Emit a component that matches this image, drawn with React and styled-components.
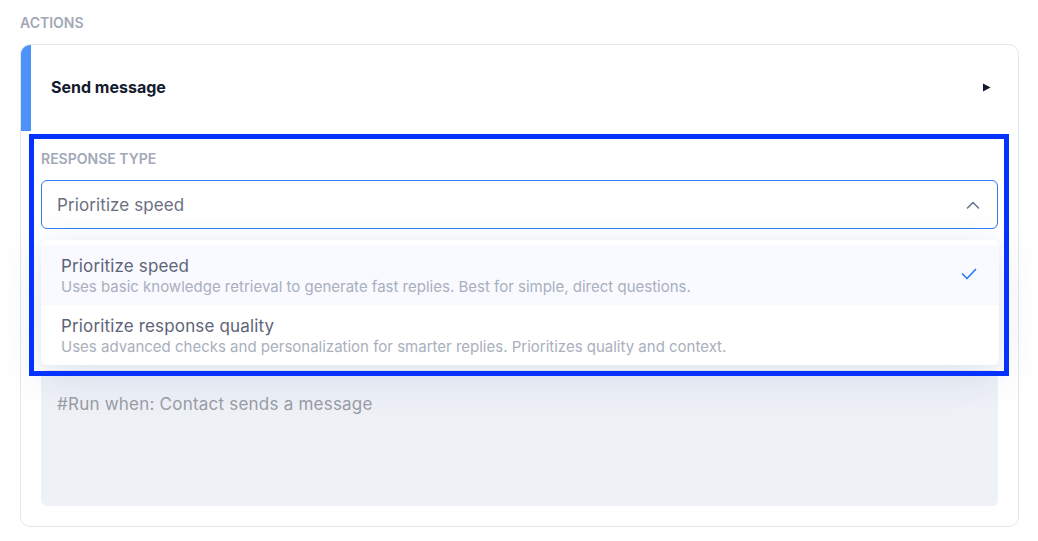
import React from "react";
import styled, { createGlobalStyle } from "styled-components";

const Global = createGlobalStyle`
  html, body { margin: 0; padding: 0; background: #ffffff; }
  body { font-family: Inter, "Noto Sans", Arial, sans-serif; -webkit-font-smoothing: antialiased; }
  * { box-sizing: border-box; }
`;

const Page = styled.div`
  width: 1038px;
  height: 541px;
  padding: 15px 19px 0 20px;
  overflow: hidden;
`;

const SectionLabel = styled.div`
  font-size: 14px;
  line-height: 16px;
  font-weight: 600;
  color: #a1a8b8;
  text-transform: uppercase;
  margin-bottom: 13px;
`;

const Card = styled.div`
  position: relative;
  border: 1px solid #e2e8f0;
  border-radius: 10px;
  background: #ffffff;
`;

const Header = styled.div`
  display: flex;
  align-items: center;
  justify-content: space-between;
  height: 86px;
  padding: 0 27px 2px 20px;
  border-left: 10px solid #4b93f8;
  border-top-left-radius: 9px;
`;

const Title = styled.div`
  font-size: 16px;
  font-weight: 700;
  color: #141a2e;
`;

const Body = styled.div`
  padding: 20px 20px 20px 20px;
`;

const Field = styled.div`
  position: relative;
  &::after {
    content: "";
    position: absolute;
    top: -17px;
    left: -12px;
    right: -11px;
    bottom: -147px;
    border: 5px solid #0433ff;
    pointer-events: none;
    z-index: 5;
  }
`;

const FieldLabel = styled(SectionLabel)`
  margin-bottom: 13px;
`;

const Select = styled.div`
  display: flex;
  align-items: center;
  justify-content: space-between;
  height: 49px;
  padding: 0 17px 0 15px;
  border: 1px solid #2f7cf6;
  border-radius: 6px;
  background: #ffffff;
  font-size: 17px;
  letter-spacing: 0.1px;
  color: #6a7081;
`;

const Menu = styled.div`
  position: absolute;
  left: 0;
  right: -1px;
  top: calc(100% + 11px);
  padding: 5px 0 0 0;
  background: #ffffff;
  border-radius: 6px;
  box-shadow: 0 10px 44px rgba(40, 70, 150, 0.13), 0 2px 8px rgba(40, 70, 150, 0.05);
  z-index: 3;
`;

const Option = styled.div`
  display: flex;
  align-items: flex-start;
  justify-content: space-between;
  height: 60px;
  padding: 10px 22px 0 20px;
  background: ${(p) => (p.$active ? "#f8faff" : "#ffffff")};
  &:last-child { border-radius: 0 0 6px 6px; }
`;

const OptionText = styled.div`
  display: flex;
  flex-direction: column;
`;

const OptionTitle = styled.div`
  font-size: 17px;
  line-height: 22px;
  letter-spacing: 0.15px;
  color: #5d6477;
`;

const OptionDesc = styled.div`
  font-size: 15px;
  line-height: 20px;
  color: #a9afbd;
`;

const CheckSlot = styled.div`
  display: flex;
  align-items: center;
  height: 30px;
  padding-top: 8px;
`;

const TextArea = styled.div`
  margin-top: 141px;
  height: 136px;
  padding: 24px 16px;
  background: #eef1f6;
  border-radius: 6px;
  font-size: 17px;
  line-height: 20px;
  letter-spacing: 0.22px;
  color: #9a9da5;
`;

const Play = () => (
  <svg width="9" height="9" viewBox="0 0 9 9">
    <path d="M1 0.5 L8.5 4.5 L1 8.5 Z" fill="#141a2e" />
  </svg>
);

const ChevronUp = () => (
  <svg width="14" height="8" viewBox="0 0 14 8">
    <path d="M1.5 7 L7 1.5 L12.5 7" fill="none" stroke="#6b7590" strokeWidth="1.6" strokeLinecap="round" strokeLinejoin="round" />
  </svg>
);

const Check = () => (
  <svg width="16" height="12" viewBox="0 0 16 12">
    <path d="M1.5 6 L6 10.5 L14.5 1.5" fill="none" stroke="#2f7cf6" strokeWidth="1.7" strokeLinecap="round" strokeLinejoin="round" />
  </svg>
);

const options = [
  {
    title: "Prioritize speed",
    desc: "Uses basic knowledge retrieval to generate fast replies. Best for simple, direct questions.",
    active: true,
  },
  {
    title: "Prioritize response quality",
    desc: "Uses advanced checks and personalization for smarter replies. Prioritizes quality and context.",
    active: false,
  },
];

export default function App() {
  return (
    <>
      <Global />
      <Page>
        <SectionLabel>Actions</SectionLabel>
        <Card>
          <Header>
            <Title>Send message</Title>
            <Play />
          </Header>
          <Body>
            <Field>
              <FieldLabel>Response type</FieldLabel>
              <Select>
                <span>Prioritize speed</span>
                <ChevronUp />
              </Select>
              <Menu>
                {options.map((o) => (
                  <Option key={o.title} $active={o.active}>
                    <OptionText>
                      <OptionTitle>{o.title}</OptionTitle>
                      <OptionDesc>{o.desc}</OptionDesc>
                    </OptionText>
                    {o.active && (
                      <CheckSlot>
                        <Check />
                      </CheckSlot>
                    )}
                  </Option>
                ))}
              </Menu>
            </Field>
            <TextArea>#Run when: Contact sends a message</TextArea>
          </Body>
        </Card>
      </Page>
    </>
  );
}
